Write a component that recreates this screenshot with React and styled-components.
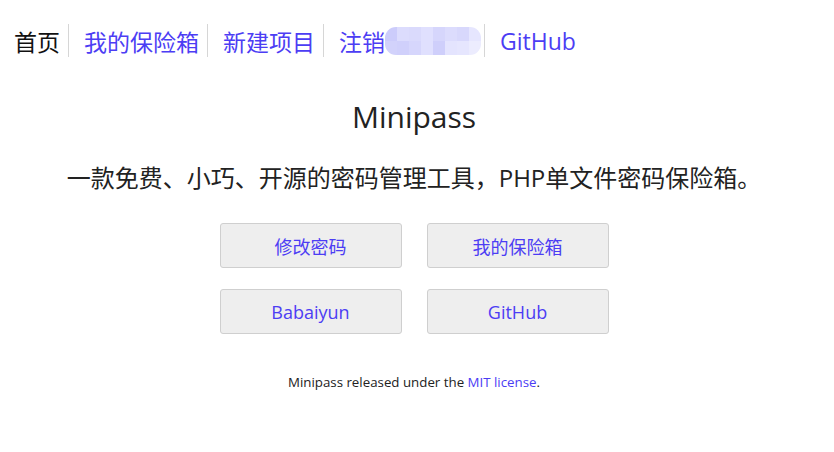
import React from "react";
import styled, { createGlobalStyle } from "styled-components";

const GlobalStyle = createGlobalStyle`
  body {
    margin: 8px;
    background: #fff;
    color: #222;
    font-family: "Open Sans", "Noto Sans CJK SC", sans-serif;
  }
`;

const LINK = "#4c3df4";

const Nav = styled.nav`
  display: flex;
  align-items: center;
  margin-top: 16px;
  padding-left: 6px;
`;

const NavItem = styled.a`
  display: flex;
  align-items: center;
  height: 33px;
  padding: 0 8px 0 ${(p) => (p.$first ? 0 : 15)}px;
  border-right: ${(p) => (p.$last ? "none" : "1px solid #d6d6d6")};
  font-family: "Noto Sans CJK SC", sans-serif;
  font-size: 23px;
  color: ${(p) => (p.$active ? "#111" : LINK)};
  text-decoration: none;
  white-space: nowrap;
`;

const Latin = styled.span`
  font-family: "Open Sans", sans-serif;
`;

const Mosaic = styled.span`
  display: inline-grid;
  grid-template-columns: repeat(8, 12px);
  grid-template-rows: 14px 14px;
  margin-right: -5px;
  border-radius: 11px;
  overflow: hidden;
`;

const Cell = styled.span`
  background: ${(p) => p.$c};
`;

const cells = [
  "#ccccfb", "#dcdcfd", "#dadafc", "#e0e0fe", "#d6d6fc", "#dcdcfd", "#d8d8fc", "#e6e6fe",
  "#d2d2fb", "#d0d0fb", "#d6d6fc", "#e0e0fe", "#cfcffb", "#e4e4fe", "#e6e6fe", "#ececfe",
];

const Main = styled.main`
  display: flex;
  flex-direction: column;
  align-items: center;
  padding-right: 6px;
`;

const Title = styled.h1`
  margin: 39px 0 0;
  font-size: 30px;
  font-weight: 400;
  color: #222;
`;

const Subtitle = styled.p`
  margin: 22px 0 0;
  font-family: "Open Sans", "Noto Sans CJK SC", sans-serif;
  font-size: 24px;
  color: #222;
`;

const Buttons = styled.div`
  display: grid;
  grid-template-columns: 182px 182px;
  column-gap: 25px;
  row-gap: 21px;
  margin-top: 29px;
`;

const Button = styled.a`
  display: flex;
  align-items: center;
  justify-content: center;
  height: 45px;
  box-sizing: border-box;
  border: 1px solid #cfcfcf;
  border-radius: 3px;
  background: #eeeeee;
  color: ${LINK};
  font-family: "Open Sans", "Noto Sans CJK SC", sans-serif;
  font-size: 18px;
  text-decoration: none;
`;

const Footer = styled.p`
  margin: 39px 0 0;
  font-size: 13.3px;
  color: #222;
  a {
    color: ${LINK};
    text-decoration: none;
  }
`;

const navItems = [
  { label: "首页", active: true },
  { label: "我的保险箱" },
  { label: "新建项目" },
  { label: "注销", user: true },
  { label: "GitHub", latin: true },
];

export default function App() {
  return (
    <>
      <GlobalStyle />
      <Nav>
        {navItems.map((it, i) => (
          <NavItem
            key={it.label}
            href="#"
            $first={i === 0}
            $last={i === navItems.length - 1}
            $active={it.active}
          >
            {it.latin ? <Latin>{it.label}</Latin> : it.label}
            {it.user && (
              <Mosaic>
                {cells.map((c, j) => (
                  <Cell key={j} $c={c} />
                ))}
              </Mosaic>
            )}
          </NavItem>
        ))}
      </Nav>
      <Main>
        <Title>Minipass</Title>
        <Subtitle>一款免费、小巧、开源的密码管理工具，PHP单文件密码保险箱。</Subtitle>
        <Buttons>
          <Button href="#">修改密码</Button>
          <Button href="#">我的保险箱</Button>
          <Button href="#">Babaiyun</Button>
          <Button href="#">GitHub</Button>
        </Buttons>
        <Footer>
          Minipass released under the <a href="#">MIT license</a>.
        </Footer>
      </Main>
    </>
  );
}
